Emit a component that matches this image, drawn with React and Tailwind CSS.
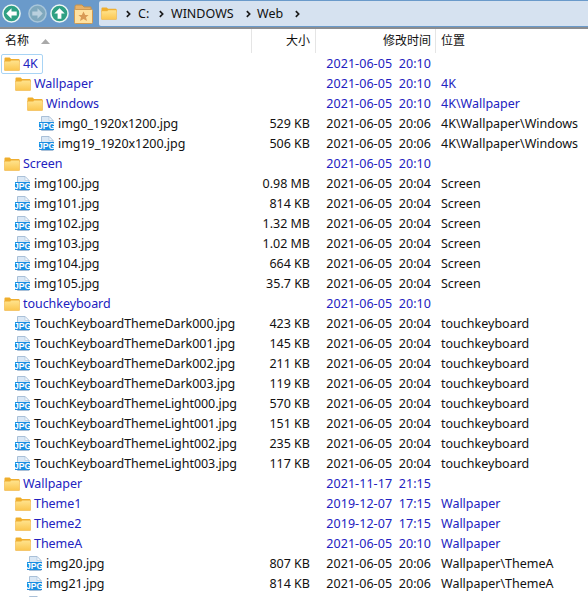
import { useId } from "react";

const FOLDER = "f";
const FILE = "j";
const STAMP_A = "2021-06-05  20:10";
const STAMP_B = "2021-06-05  20:04";
const STAMP_C = "2021-06-05  20:06";

const rows = [
  { type: FOLDER, depth: 0, name: "4K", date: STAMP_A, selected: true },
  { type: FOLDER, depth: 1, name: "Wallpaper", date: STAMP_A, loc: "4K" },
  { type: FOLDER, depth: 2, name: "Windows", date: STAMP_A, loc: "4K\\Wallpaper" },
  { type: FILE, depth: 3, name: "img0_1920x1200.jpg", size: "529 KB", date: STAMP_C, loc: "4K\\Wallpaper\\Windows" },
  { type: FILE, depth: 3, name: "img19_1920x1200.jpg", size: "506 KB", date: STAMP_C, loc: "4K\\Wallpaper\\Windows" },
  { type: FOLDER, depth: 0, name: "Screen", date: STAMP_A },
  { type: FILE, depth: 1, name: "img100.jpg", size: "0.98 MB", date: STAMP_B, loc: "Screen" },
  { type: FILE, depth: 1, name: "img101.jpg", size: "814 KB", date: STAMP_B, loc: "Screen" },
  { type: FILE, depth: 1, name: "img102.jpg", size: "1.32 MB", date: STAMP_B, loc: "Screen" },
  { type: FILE, depth: 1, name: "img103.jpg", size: "1.02 MB", date: STAMP_B, loc: "Screen" },
  { type: FILE, depth: 1, name: "img104.jpg", size: "664 KB", date: STAMP_B, loc: "Screen" },
  { type: FILE, depth: 1, name: "img105.jpg", size: "35.7 KB", date: STAMP_B, loc: "Screen" },
  { type: FOLDER, depth: 0, name: "touchkeyboard", date: STAMP_A },
  { type: FILE, depth: 1, name: "TouchKeyboardThemeDark000.jpg", size: "423 KB", date: STAMP_B, loc: "touchkeyboard" },
  { type: FILE, depth: 1, name: "TouchKeyboardThemeDark001.jpg", size: "145 KB", date: STAMP_B, loc: "touchkeyboard" },
  { type: FILE, depth: 1, name: "TouchKeyboardThemeDark002.jpg", size: "211 KB", date: STAMP_B, loc: "touchkeyboard" },
  { type: FILE, depth: 1, name: "TouchKeyboardThemeDark003.jpg", size: "119 KB", date: STAMP_B, loc: "touchkeyboard" },
  { type: FILE, depth: 1, name: "TouchKeyboardThemeLight000.jpg", size: "570 KB", date: STAMP_B, loc: "touchkeyboard" },
  { type: FILE, depth: 1, name: "TouchKeyboardThemeLight001.jpg", size: "151 KB", date: STAMP_B, loc: "touchkeyboard" },
  { type: FILE, depth: 1, name: "TouchKeyboardThemeLight002.jpg", size: "235 KB", date: STAMP_B, loc: "touchkeyboard" },
  { type: FILE, depth: 1, name: "TouchKeyboardThemeLight003.jpg", size: "117 KB", date: STAMP_B, loc: "touchkeyboard" },
  { type: FOLDER, depth: 0, name: "Wallpaper", date: "2021-11-17  21:15" },
  { type: FOLDER, depth: 1, name: "Theme1", date: "2019-12-07  17:15", loc: "Wallpaper" },
  { type: FOLDER, depth: 1, name: "Theme2", date: "2019-12-07  17:15", loc: "Wallpaper" },
  { type: FOLDER, depth: 1, name: "ThemeA", date: STAMP_A, loc: "Wallpaper" },
  { type: FILE, depth: 2, name: "img20.jpg", size: "807 KB", date: STAMP_C, loc: "Wallpaper\\ThemeA" },
  { type: FILE, depth: 2, name: "img21.jpg", size: "814 KB", date: STAMP_C, loc: "Wallpaper\\ThemeA" },
  { type: FILE, depth: 2, name: "", date: "", noLabel: true },
];

const indents = ["pl-[4px]", "pl-[15px]", "pl-[27px]", "pl-[39px]"];

const FolderIcon = ({ className = "w-4 h-[14px]" }) => {
  const id = useId();
  return (
    <svg viewBox="0 0 17 14" preserveAspectRatio="none" className={`shrink-0 ${className}`}>
      <defs>
        <linearGradient id={id} x1="0" y1="0" x2="0" y2="1">
          <stop offset="0" stopColor="#ffe48f" />
          <stop offset="1" stopColor="#fbc64f" />
        </linearGradient>
      </defs>
      <path d="M0.5 1.5Q0.5 0.5 1.5 0.5H6L7.5 2H15.5Q16.5 2 16.5 3V5H0.5Z" fill="#efae2c" />
      <path d="M0.5 4.2L6.5 4.2L8 3.2H16.5V13Q16.5 13.5 16 13.5H1Q0.5 13.5 0.5 13Z" fill={`url(#${id})`} stroke="#f0b443" strokeWidth="0.6" />
    </svg>
  );
};

const JpgIcon = ({ noLabel }) => (
  <svg viewBox="0 0 16 15" className="w-4 h-[15px] shrink-0 -translate-y-px">
    <path d="M2.5 0.5H10L14 4.5V14.5H2.5Z" fill="#dbe8f5" stroke="#a9c0d8" />
    <path d="M10 0.5V4.5H14Z" fill="#f4f8fc" stroke="#a9c0d8" strokeWidth="0.6" />
    {!noLabel && (
      <>
        <rect x="0" y="6" width="15" height="8" fill="#1a8ee2" />
        <text x="7.5" y="13" textAnchor="middle" fontSize="8.6" fontWeight="700" fill="#fff" fontFamily="'Liberation Sans', sans-serif">JPG</text>
      </>
    )}
  </svg>
);

const NavButton = ({ dir, dim }) => {
  const arrows = {
    left: "M4.5 10L10 4.5V8H15.5V12H10V15.5Z",
    right: "M15.5 10L10 4.5V8H4.5V12H10V15.5Z",
    up: "M10 4.5L15.5 10H12V15.5H8V10H4.5Z",
  };
  return (
    <svg viewBox="0 0 20 20" className="w-[19px] h-[19px] shrink-0">
      <circle cx="10" cy="10" r="9" fill={dim ? "#7fa8bd" : "#2fa083"} stroke={dim ? "#a9c6da" : "#eef8f5"} strokeWidth="1.6" />
      <path d={arrows[dir]} fill={dim ? "#b9d0de" : "#fff"} />
    </svg>
  );
};

const Chevron = () => (
  <svg viewBox="0 0 6 8" className="w-[5px] h-2 shrink-0">
    <path d="M1 0.6L4.4 4L1 7.4" fill="none" stroke="#1a1a1a" strokeWidth="2" />
  </svg>
);

const Toolbar = () => (
  <div className="h-[29px] bg-[#6a9aca] border-b-2 border-[#8b8d90] flex items-stretch pt-px pb-px">
    <div className="flex items-center pl-[2px]">
      <NavButton dir="left" />
      <div className="w-[7px]" />
      <NavButton dir="right" dim />
      <div className="w-[3px]" />
      <NavButton dir="up" />
      <svg viewBox="0 0 19 20" className="w-[19px] h-5 ml-[5px]">
        <path d="M1 2.5Q1 1 2.5 1H8L10 3H17V7H1Z" fill="#e8b268" stroke="#c8924a" />
        <rect x="0.5" y="5.5" width="18" height="14" rx="1" fill="#ffe2a0" stroke="#cf9a52" />
        <path d="M9.5 7.5L11.2 11H14.6L12 13.3L13 17L9.5 15L6 17L7 13.3L4.4 11H7.8Z" fill="#d99a55" />
      </svg>
    </div>
    <div className="ml-[6px] flex-1 bg-[#d6e2f0] flex items-center pl-[2px] text-[12.5px] text-[#111] rounded-l-[2px]">
      <FolderIcon className="w-4 h-[13px]" />
      <div className="ml-[9px]"><Chevron /></div>
      <span className="ml-[7px] w-[11px] pt-[2px]">C:</span>
      <div className="ml-[10px]"><Chevron /></div>
      <span className="ml-[7px] w-[64px] pt-[2px]">WINDOWS</span>
      <div className="ml-[11px]"><Chevron /></div>
      <span className="ml-[6px] w-[26px] pt-[2px]">Web</span>
      <div className="ml-[12px]"><Chevron /></div>
    </div>
  </div>
);

const Header = () => (
  <div className="grid grid-cols-[252px_64px_120px_1fr] h-[25px] text-[12px] text-[#111]">
    <div className="flex items-center pl-[5px] h-6 border-r border-[#e5e5e5]">
      名称
      <svg viewBox="0 0 9 5" className="w-[9px] h-[5px] ml-3"><path d="M4.5 0L9 5H0Z" fill="#a9a9a9" /></svg>
    </div>
    <div className="flex items-center justify-end pr-[5px] h-6 border-r border-[#e5e5e5]">大小</div>
    <div className="flex items-center justify-end pr-[4px] h-6 border-r border-[#e5e5e5]">修改时间</div>
    <div className="flex items-center pl-[5px] h-6">位置</div>
  </div>
);

const Row = ({ row }) => {
  const isFolder = row.type === FOLDER;
  const color = isFolder ? "text-[#2222c0]" : "text-[#111]";
  return (
    <div className="grid grid-cols-[252px_64px_120px_1fr] h-5 items-center">
      <div className={`h-5 flex ${indents[row.depth]}`}>
        <div className={`flex items-center gap-[3px] ${row.selected ? "h-5 -ml-[3px] pl-[2px] pr-1 border border-[#a8d4f5] rounded-[2px]" : ""}`}>
          {isFolder ? <FolderIcon /> : <JpgIcon noLabel={row.noLabel} />}
          {row.name && <span className={`tracking-[-0.05px] ${color}`}>{row.name}</span>}
        </div>
      </div>
      <div className="text-right pr-[6px] text-[#111]">{row.size}</div>
      <div className={`text-right pr-[5px] whitespace-pre tracking-[0.06px] ${row.type === FOLDER || row.date?.startsWith("2019") ? "text-[#2222c0]" : "text-[#111]"}`}>{row.date}</div>
      <div className={`pl-[5px] whitespace-nowrap ${color}`}>{row.loc}</div>
    </div>
  );
};

const App = () => (
  <div className="w-[588px] h-[597px] overflow-hidden bg-white text-[12.5px] font-['Noto_Sans','Noto_Sans_CJK_SC',sans-serif]">
    <Toolbar />
    <Header />
    <div>
      {rows.map((row, i) => (
        <Row key={i} row={row} />
      ))}
    </div>
  </div>
);

export default App;
